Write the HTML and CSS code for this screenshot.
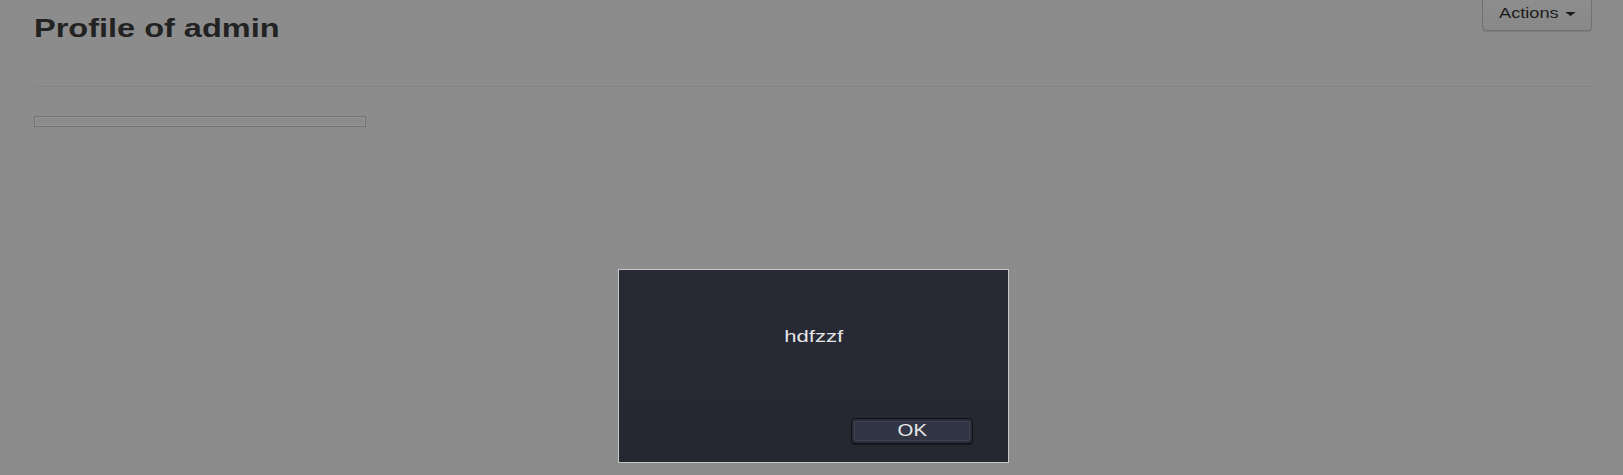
FILE: index.html
```html
<!DOCTYPE html>
<html>
<head>
<meta charset="utf-8">
<link rel="stylesheet" href="styles.css">
</head>
<body>
<div class="page">
  <div class="header">
    <h1 class="title"><span class="stretch">Profile of admin</span></h1>
    <button class="actions"><span class="stretch">Actions <span class="caret"></span></span></button>
  </div>
  <hr class="rule">
  <div class="bar"></div>
</div>
<div class="dialog">
  <div class="dialog-body"><span class="msg">hdfzzf</span></div>
  <div class="dialog-footer">
    <button class="ok"><span class="ok-ring"><span class="ok-text">OK</span></span></button>
  </div>
</div>
</body>
</html>
```

FILE: styles.css
```css
html, body {
  margin: 0;
  padding: 0;
  background: #8c8c8c;
  height: 100%;
  overflow: hidden;
}
body {
  font-family: "Liberation Sans", Arial, sans-serif;
  color: #1c1c1c;
}
.page {
  padding: 0 29px 0 34px;
}
.header {
  display: flex;
  justify-content: space-between;
  align-items: flex-start;
  height: 42px;
}
.title {
  margin: 14px 0 0 0;
  font-size: 25px;
  line-height: 28px;
  font-weight: bold;
  color: #222;
}
.stretch {
  display: inline-block;
  transform: scaleX(1.3);
  transform-origin: 0 50%;
}
.actions {
  margin: -5px 2px 0 0;
  width: 110px;
  height: 36px;
  padding: 0 0 1px 16px;
  text-align: left;
  background: linear-gradient(#8e8e8e, #888888);
  border: 1px solid #717171;
  border-radius: 0 0 4px 4px;
  box-shadow: 0 1px 1px rgba(0,0,0,0.12);
  font-family: "Liberation Sans", Arial, sans-serif;
  font-size: 14px;
  color: #1c1c1c;
}
.caret {
  display: inline-block;
  width: 0;
  height: 0;
  border-left: 4px solid transparent;
  border-right: 4px solid transparent;
  border-top: 4px solid #1a1a1a;
  vertical-align: middle;
  margin-left: 1px;
}
.rule {
  margin: 44px 0 0 0;
  border: 0;
  border-top: 1px solid #838383;
  height: 0;
}
.bar {
  margin-top: 29px;
  width: 330px;
  height: 9px;
  border: 1px solid #737373;
  box-shadow: inset 0 0 0 1px #959595;
  background: #8c8c8c;
}
.dialog {
  position: absolute;
  left: 618px;
  top: 269px;
  width: 389px;
  height: 192px;
  border: 1px solid #c8c8c8;
  background: #262833;
  display: flex;
  flex-direction: column;
  font-family: "Liberation Sans", Arial, sans-serif;
}
.dialog-body {
  height: 131px;
  box-sizing: border-box;
  padding-top: 57px;
  text-align: center;
  background: #272935;
}
.msg {
  display: inline-block;
  font-size: 17px;
  line-height: 20px;
  color: #e6e6e6;
  transform: scaleX(1.3);
}
.dialog-footer {
  flex: 1;
  background: #252731;
  display: flex;
  justify-content: flex-end;
  align-items: flex-start;
  padding: 17px 35px 0 0;
}
.ok {
  width: 122px;
  height: 26px;
  padding: 2px;
  margin: 0;
  background: #2b2e3a;
  border: 1px solid #111218;
  border-radius: 4px;
  box-sizing: border-box;
  box-shadow: 0 1px 1px rgba(0,0,0,0.4);
  display: flex;
}
.ok-ring {
  flex: 1;
  border: 1px solid #3d4150;
  border-radius: 2px;
  background: #323544;
  display: flex;
  align-items: center;
  justify-content: center;
}
.ok-text {
  display: inline-block;
  font-family: "Liberation Sans", Arial, sans-serif;
  font-size: 17px;
  line-height: 18px;
  color: #e8e8e8;
  transform: scaleX(1.2);
}
```
